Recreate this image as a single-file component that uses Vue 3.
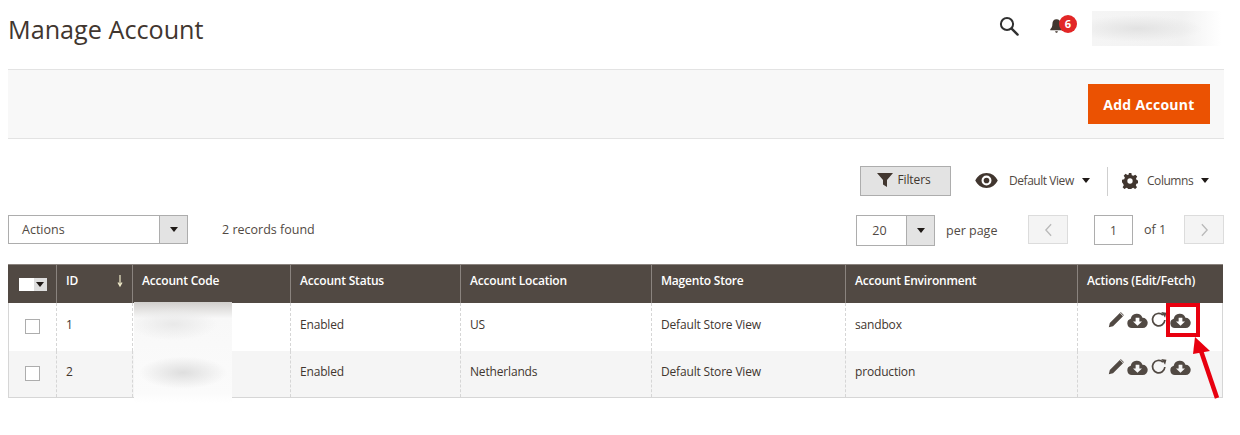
<script setup>
const rows = [
  { id: 1, location: 'US', env: 'sandbox' },
  { id: 2, location: 'Netherlands', env: 'production' }
]
const heads = ['Account Status', 'Account Location', 'Magento Store', 'Account Environment']
</script>

<template>
  <div class="page">
    <header class="top">
      <h1>Manage Account</h1>
      <svg class="search" viewBox="0 0 20 20" width="20" height="20"><circle cx="8" cy="8" r="6.1" fill="none" stroke="#303030" stroke-width="2"/><path d="M12.6 12.6 18.6 18.6" stroke="#303030" stroke-width="2.4" stroke-linecap="round"/></svg>
      <div class="bell">
        <svg viewBox="0 0 16 18" width="15" height="16"><path d="M8 1.5c-3 0-4.6 2.3-4.6 5.2 0 3-1 4.6-2.4 6v1.2h14v-1.2c-1.400-1.400-2.400-3-2.400-6C12.600 3.800 11 1.500 8 1.500z" fill="#41362f"/><path d="M6.500 15h3c0 1-.6 1.700-1.500 1.700S6.500 16 6.500 15z" fill="#41362f"/></svg>
        <span class="badge">6</span>
      </div>
      <div class="user-blur"></div>
    </header>

    <section class="band">
      <button class="primary">Add Account</button>
    </section>

    <div class="row-a">
      <button class="filters">
        <svg viewBox="0 0 16 14" width="16" height="14"><path d="M0 0h16L10 7v7L6 11.500V7z" fill="#41362f"/></svg>
        Filters
      </button>
      <div class="view">
        <svg viewBox="0 0 24 16" width="23" height="15"><path d="M12 0C6.500 0 2.300 3.300 0 8c2.300 4.700 6.500 8 12 8s9.700-3.300 12-8c-2.300-4.700-6.500-8-12-8zm0 13.300A5.300 5.300 0 1 1 12 2.700a5.300 5.300 0 0 1 0 10.600z" fill="#41362f"/><circle cx="12" cy="8" r="3" fill="#41362f"/></svg>
        <span class="view-label">Default View</span>
        <i class="caret"></i>
      </div>
      <div class="divider"></div>
      <div class="cols">
        <svg viewBox="0 0 24 24" width="16" height="16"><path d="M10 0h4l.7 3.300 2.400 1 2.900-1.800 2.800 2.800-1.800 2.900 1 2.400 3 .7v4l-3.300.7-1 2.400 1.800 2.900-2.800 2.800-2.900-1.800-2.400 1-.7 3.300h-4l-.7-3.300-2.400-1-2.900 1.800-2.800-2.800 1.800-2.900-1-2.400L0 14v-4l3.300-.7 1-2.400L2.500 4 5.300 1.200l2.900 1.800 2.400-1zM12 8a4 4 0 1 0 0 8 4 4 0 0 0 0-8z" fill="#41362f" fill-rule="evenodd"/></svg>
        <span class="view-label">Columns</span>
        <i class="caret"></i>
      </div>
    </div>

    <div class="row-b">
      <div class="select actions"><span class="val">Actions</span><span class="arrow"><i class="caret"></i></span></div>
      <span class="records">2 records found</span>
      <div class="select pager-size"><span class="val center">20</span><span class="arrow"><i class="caret"></i></span></div>
      <span class="perpage">per page</span>
      <button class="nav prev"><svg viewBox="0 0 10 16" width="9" height="14"><path d="M8 1.500 2 8l6 6.500" fill="none" stroke="#b9b9b9" stroke-width="1.500"/></svg></button>
      <div class="page-input">1</div>
      <span class="of">of 1</span>
      <button class="nav next"><svg viewBox="0 0 10 16" width="9" height="14"><path d="M2 1.500 8 8l-6 6.500" fill="none" stroke="#b9b9b9" stroke-width="1.500"/></svg></button>
    </div>

    <table class="grid">
      <colgroup>
        <col style="width:48px"><col style="width:76px"><col style="width:158px"><col style="width:170px">
        <col style="width:191px"><col style="width:194px"><col style="width:232px"><col style="width:145px">
      </colgroup>
      <thead>
        <tr>
          <th class="c-check"><span class="mass"><b></b><em><i class="caret"></i></em></span></th>
          <th class="c-id">ID<svg class="sort" viewBox="0 0 6 14" width="6" height="14"><path d="M3 1v10M1 8.500 3 12l2-3.500" fill="none" stroke="#eee9c8" stroke-width="1.200"/></svg></th>
          <th>Account Code</th>
          <th v-for="h in heads" :key="h">{{ h }}</th>
          <th>Actions (Edit/Fetch)</th>
        </tr>
      </thead>
      <tbody>
        <tr v-for="r in rows" :key="r.id">
          <td class="c-check"><span class="box"></span></td>
          <td>{{ r.id }}</td>
          <td></td>
          <td>Enabled</td>
          <td>{{ r.location }}</td>
          <td>Default Store View</td>
          <td>{{ r.env }}</td>
          <td class="c-actions">
            <div class="icons">
              <svg viewBox="0 0 16 16" width="16" height="16"><path d="M11.800 1 15 4.200 5 14.200 .8 15.200 1.800 11zM12.700 0l-.5.500 3.300 3.300.5-.5z" fill="#514943"/></svg>
              <svg viewBox="0 0 22 16" width="21" height="15"><path fill-rule="evenodd" fill="#514943" d="M5 16a5 5 0 0 1-1.200-9.800A6.500 6.500 0 0 1 16.300 5 5.500 5.500 0 0 1 16.500 16zM9 5v4H6.200L11 13.500 15.800 9H13V5z"/></svg>
              <svg class="refresh" viewBox="0 0 16 16" width="18" height="18"><path d="M13.200 8A5.500 5.500 0 1 1 11.500 3.700" fill="none" stroke="#514943" stroke-width="1.500"/><path d="M10 0.800 14.600 1.500 13.400 6z" fill="#514943"/></svg>
              <svg viewBox="0 0 22 16" width="21" height="15"><path fill-rule="evenodd" fill="#514943" d="M5 16a5 5 0 0 1-1.200-9.800A6.500 6.500 0 0 1 16.300 5 5.500 5.500 0 0 1 16.500 16zM9 5v4H6.200L11 13.500 15.800 9H13V5z"/></svg>
            </div>
          </td>
        </tr>
      </tbody>
    </table>

    <div class="code-blur"></div>
    <div class="mark"></div>
    <svg class="pointer" viewBox="0 0 40 75" width="40" height="75"><path d="M27 62 9 9" stroke="#e8000f" stroke-width="4.500" fill="none"/><path d="M5 1 20 15 3 18z" fill="#e8000f"/></svg>
  </div>
</template>

<style>
html, body { margin: 0; background: #fff; }
</style>

<style scoped>
.page { position: relative; width: 1240px; height: 435px; overflow: hidden; font-family: "Open Sans", "Liberation Sans", sans-serif; font-size: 12px; color: #41362f; }
.top { height: 69px; display: flex; align-items: flex-start; padding-left: 8px; box-sizing: border-box; }
h1 { margin: 11px 0 0; font-size: 25.200px; line-height: 36px; font-weight: 400; color: #41362f; flex: 1; }
.search { margin: 16px 0 0; }
.bell { position: relative; margin: 18px 0 0 30px; width: 43px; height: 20px; }
.bell svg { display: block; }
.badge { position: absolute; left: 10px; top: -3px; width: 18px; height: 18px; border-radius: 50%; background: #e22626; color: #fff; font-size: 11px; font-weight: 700; line-height: 18px; text-align: center; }
.user-blur { width: 130px; height: 35px; margin: 11px 18px 0 0; background: radial-gradient(ellipse 50% 38% at 35% 50%, #e2e2e2, transparent), linear-gradient(90deg, #f5f5f5, #f2f2f2 70%, #fff); }
.band { margin-left: 8px; width: 1216px; height: 70px; box-sizing: border-box; border-top: 1px solid #e3e3e3; border-bottom: 1px solid #e3e3e3; background: #f8f8f8; display: flex; justify-content: flex-end; align-items: center; padding-right: 14px; }
.primary { width: 122px; height: 40px; border: 0; background: #eb5202; color: #fff; font: 700 14px/42px "Open Sans", sans-serif; letter-spacing: .3px; padding: 0; }
.row-a { display: flex; align-items: center; height: 30px; margin-top: 27px; padding-left: 860px; }
.filters { width: 91px; height: 30px; box-sizing: border-box; background: #e3e3e3; border: 1px solid #adadad; color: #41362f; font: 400 12px "Open Sans", sans-serif; display: flex; align-items: center; justify-content: center; gap: 4px; padding: 0 3px 3px 0; letter-spacing: -.1px; }
.view { display: flex; align-items: center; margin-left: 24px; width: 132px; flex: none; padding-bottom: 1px; box-sizing: border-box; }
.view svg { margin-right: 11px; }
.view-label { font-size: 12px; color: #514943; letter-spacing: -.45px; }
.view .caret { margin-left: 8px; }
.divider { width: 1px; height: 29px; background: #cfcfcf; }
.cols { display: flex; align-items: center; margin-left: 14px; padding-bottom: 1px; }
.cols .view-label { margin-left: 9px; }
.cols .caret { margin-left: 8px; }
.caret { display: inline-block; width: 0; height: 0; border-left: 4px solid transparent; border-right: 4px solid transparent; border-top: 5px solid #1f1a17; }
.row-b { display: flex; align-items: flex-start; height: 31px; margin-top: 19px; padding-left: 8px; color: #514943; }
.select { box-sizing: border-box; display: flex; border: 1px solid #adadad; background: #fff; }
.actions { width: 180px; height: 29px; }
.pager-size { width: 79px; height: 31px; margin-left: 501px; }
.val { flex: 1; padding-left: 13px; line-height: 27px; font-size: 12.500px; }
.pager-size .val { line-height: 29px; padding: 0 4px 0 0; }
.center { text-align: center; }
.arrow { width: 27px; flex: none; background: #e3e3e3; border-left: 1px solid #adadad; display: flex; align-items: center; justify-content: center; }
.records { margin-left: 34px; line-height: 29px; font-size: 12.500px; width: 133px; }
.perpage { margin-left: 11px; line-height: 31px; font-size: 12.500px; width: 82px; }
.nav { width: 40px; height: 29px; box-sizing: border-box; background: #f4f4f4; border: 1px solid #dcdcdc; padding: 0; display: flex; align-items: center; justify-content: center; }
.page-input { box-sizing: border-box; width: 39px; height: 30px; margin-left: 26px; border: 1px solid #adadad; text-align: center; line-height: 29px; font-size: 12px; }
.of { margin-left: 11px; width: 40px; line-height: 29px; font-size: 12.500px; }
.grid { position: absolute; left: 8px; top: 264px; width: 1214px; table-layout: fixed; border-collapse: collapse; }
th { height: 38px; box-sizing: border-box; padding: 0 9px 7px; background: #514943; color: #fff; font-weight: 600; font-size: 12px; letter-spacing: -.2px; text-align: left; border-left: 1px solid #8a837e; border-top: 1px solid #8a837e; white-space: nowrap; }
th:first-child { border-left-color: #514943; }
th:last-child { padding-right: 0; }
td { height: 47px; box-sizing: border-box; padding: 0 9px 4px; border-left: 1px dashed #d6d6d6; color: #41362f; font-size: 12px; letter-spacing: -.17px; vertical-align: middle; }
td:first-child { border-left: 1px solid #d6d6d6; }
td:last-child { border-right: 1px solid #d6d6d6; }
tbody tr:nth-child(2) td { background: #f5f5f5; }
tbody tr:last-child td { border-bottom: 1px solid #d6d6d6; }
tbody tr:first-child td { height: 48px; }
.c-check { padding: 0 0 2px; text-align: center; }
.mass { display: inline-flex; vertical-align: middle; width: 28px; height: 13px; }
.mass b { width: 15px; background: #fff; }
.mass em { width: 13px; background: #dedede; display: flex; align-items: center; justify-content: center; }
.box { display: inline-block; width: 13px; height: 13px; border: 1px solid #adadad; background: #fff; vertical-align: middle; }
.c-id { position: relative; }
.sort { position: absolute; right: 9px; top: 9px; }
.c-actions { padding: 0; }
.icons { display: flex; align-items: center; justify-content: flex-end; padding-right: 31px; gap: 3px; margin-top: -13px; }
.refresh { margin: 0 -1px; }
.code-blur { position: absolute; left: 134px; top: 302px; width: 98px; height: 101px; background: radial-gradient(ellipse 45% 16% at 50% 70%, #dedede, transparent), radial-gradient(ellipse 45% 16% at 40% 22%, #e9e9e9, transparent), linear-gradient(#d0cecc, #f8f8f8 16%, #fbfbfb 90%, #fff); }
.mark { position: absolute; left: 1166px; top: 303px; width: 34px; height: 34px; box-sizing: border-box; border: 4px solid #e8000f; }
.pointer { position: absolute; left: 1190px; top: 336px; }
</style>
